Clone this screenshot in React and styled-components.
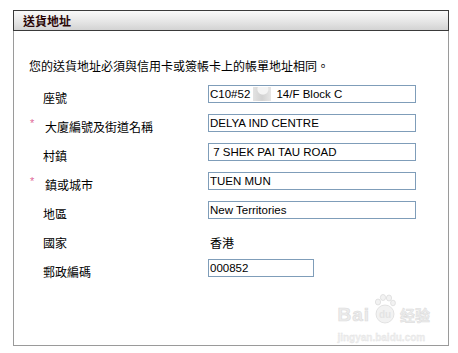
import React from "react";
import styled, { createGlobalStyle } from "styled-components";

const Global = createGlobalStyle`
  html, body { margin: 0; padding: 0; background: #fff; }
  body { font-family: "Noto Sans CJK TC", "Liberation Sans", sans-serif; color: #000; }
`;

const Panel = styled.section`
  margin: 10px 0 0 13px;
  width: 436px;
`;

const Header = styled.div`
  box-sizing: border-box;
  height: 21px;
  border: 1px solid #3a3a3a;
  background: linear-gradient(to bottom, #f9f9f9 0%, #e6e6e6 55%, #d3d3d3 100%);
  display: flex;
  align-items: center;
  padding-left: 9px;
`;

const Title = styled.h2`
  margin: 0;
  font-size: 12px;
  line-height: 14px;
  font-weight: bold;
  color: #2a0606;
  font-family: "Noto Sans CJK TC", sans-serif;
`;

const Body = styled.div`
  position: relative;
  box-sizing: border-box;
  height: 315px;
  border: 1px solid #9a9a9a;
  border-top: none;
  padding: 27px 0 0 15px;
`;

const Intro = styled.p`
  margin: 0 0 11px;
  font-size: 12px;
  line-height: 16px;
`;

const Form = styled.div`
  display: flex;
  flex-direction: column;
`;

const Row = styled.div`
  display: grid;
  grid-template-columns: 179px 1fr;
  height: 29px;
  align-items: start;
`;

const Label = styled.label`
  display: flex;
  align-items: flex-start;
  padding-top: 4px;
  padding-left: ${(p) => (p.$required ? "0" : "14px")};
  font-size: 12px;
  line-height: 18px;
`;

const Star = styled.span`
  display: inline-block;
  width: 16px;
  color: #e06a98;
  font-family: "Liberation Sans", sans-serif;
  font-size: 11px;
  line-height: 10px;
  padding-left: 1px;
  box-sizing: border-box;
`;

const Field = styled.div`
  position: relative;
  width: ${(p) => p.$w || 208}px;
  height: 18px;
`;

const Input = styled.input`
  display: block;
  box-sizing: border-box;
  width: 100%;
  height: 18px;
  border: 1px solid #7f9db9;
  padding: 0 0 0 1px;
  margin: 0;
  font-family: "Liberation Sans", Tahoma, sans-serif;
  font-size: 11.5px;
  color: #000;
  background: #fff;
  outline: none;
`;

const Blur = styled.span`
  position: absolute;
  left: 45px;
  top: 2px;
  width: 18px;
  height: 14px;
  background: radial-gradient(circle at 55% 15%, #f4f4f4 0 5px, transparent 6px),
    linear-gradient(to right, #e3e3e3, #d2d2d2 50%, #e6e6e6);
  filter: blur(0.6px);
  pointer-events: none;
`;

const Value = styled.span`
  padding: 4px 0 0 2px;
  font-size: 12px;
  line-height: 18px;
`;

const Watermark = styled.div`
  position: absolute;
  right: 18px;
  bottom: 2px;
  display: flex;
  flex-direction: column;
  align-items: flex-start;
  white-space: nowrap;
  color: #ececec;
  font-family: "Liberation Sans", sans-serif;
  pointer-events: none;
`;

const WmTop = styled.div`
  display: flex;
  align-items: flex-end;
  gap: 1px;
`;

const WmBig = styled.span`
  font-size: 19px;
  font-weight: bold;
  line-height: 19px;
  letter-spacing: 1px;
  -webkit-text-stroke: 0.6px #dcdcdc;
`;

const WmCjk = styled.span`
  font-family: "Noto Sans CJK SC", sans-serif;
  font-size: 15px;
  line-height: 18px;
  font-weight: bold;
  -webkit-text-stroke: 0.5px #dcdcdc;
`;

const WmUrl = styled.span`
  margin-top: 8px;
  font-size: 10px;
  line-height: 11px;
  font-weight: bold;
  color: #efefef;
  -webkit-text-stroke: 0.3px #e2e2e2;
`;

const Paw = () => (
  <svg width="28" height="30" viewBox="0 0 28 30">
    <g fill="#f2f2f2" stroke="#dcdcdc" strokeWidth="0.8">
      <ellipse cx="7" cy="8" rx="2.6" ry="3" />
      <ellipse cx="12" cy="3.5" rx="2.6" ry="3" />
      <ellipse cx="18" cy="4" rx="2.6" ry="3" />
      <ellipse cx="22" cy="9" rx="2.4" ry="2.8" />
      <circle cx="14" cy="20" r="9" />
    </g>
    <text x="14" y="24" textAnchor="middle" fontSize="10" fontWeight="bold" fill="#e4e4e4" fontFamily="Liberation Sans, sans-serif">du</text>
  </svg>
);

const fields = [
  { label: "座號", value: "C10#52\u2003\u2003 14/F Block C", blur: true },
  { label: "大廈編號及街道名稱", value: "DELYA IND CENTRE", required: true },
  { label: "村鎮", value: " 7 SHEK PAI TAU ROAD" },
  { label: "鎮或城市", value: "TUEN MUN", required: true },
  { label: "地區", value: "New Territories" },
  { label: "國家", text: "香港" },
  { label: "郵政編碼", value: "000852", w: 106 },
];

export default function App() {
  return (
    <>
      <Global />
      <Panel>
        <Header>
          <Title>送貨地址</Title>
        </Header>
        <Body>
          <Intro>您的送貨地址必須與信用卡或簽帳卡上的帳單地址相同。</Intro>
          <Form>
            {fields.map((f) => (
              <Row key={f.label}>
                <Label $required={f.required}>
                  {f.required && <Star>*</Star>}
                  {f.label}
                </Label>
                {f.text ? (
                  <Value>{f.text}</Value>
                ) : (
                  <Field $w={f.w}>
                    <Input defaultValue={f.value} readOnly />
                    {f.blur && <Blur />}
                  </Field>
                )}
              </Row>
            ))}
          </Form>
          <Watermark>
            <WmTop>
              <WmBig>Bai</WmBig>
              <Paw />
              <WmCjk>经验</WmCjk>
            </WmTop>
            <WmUrl>jingyan.baidu.com</WmUrl>
          </Watermark>
        </Body>
      </Panel>
    </>
  );
}
